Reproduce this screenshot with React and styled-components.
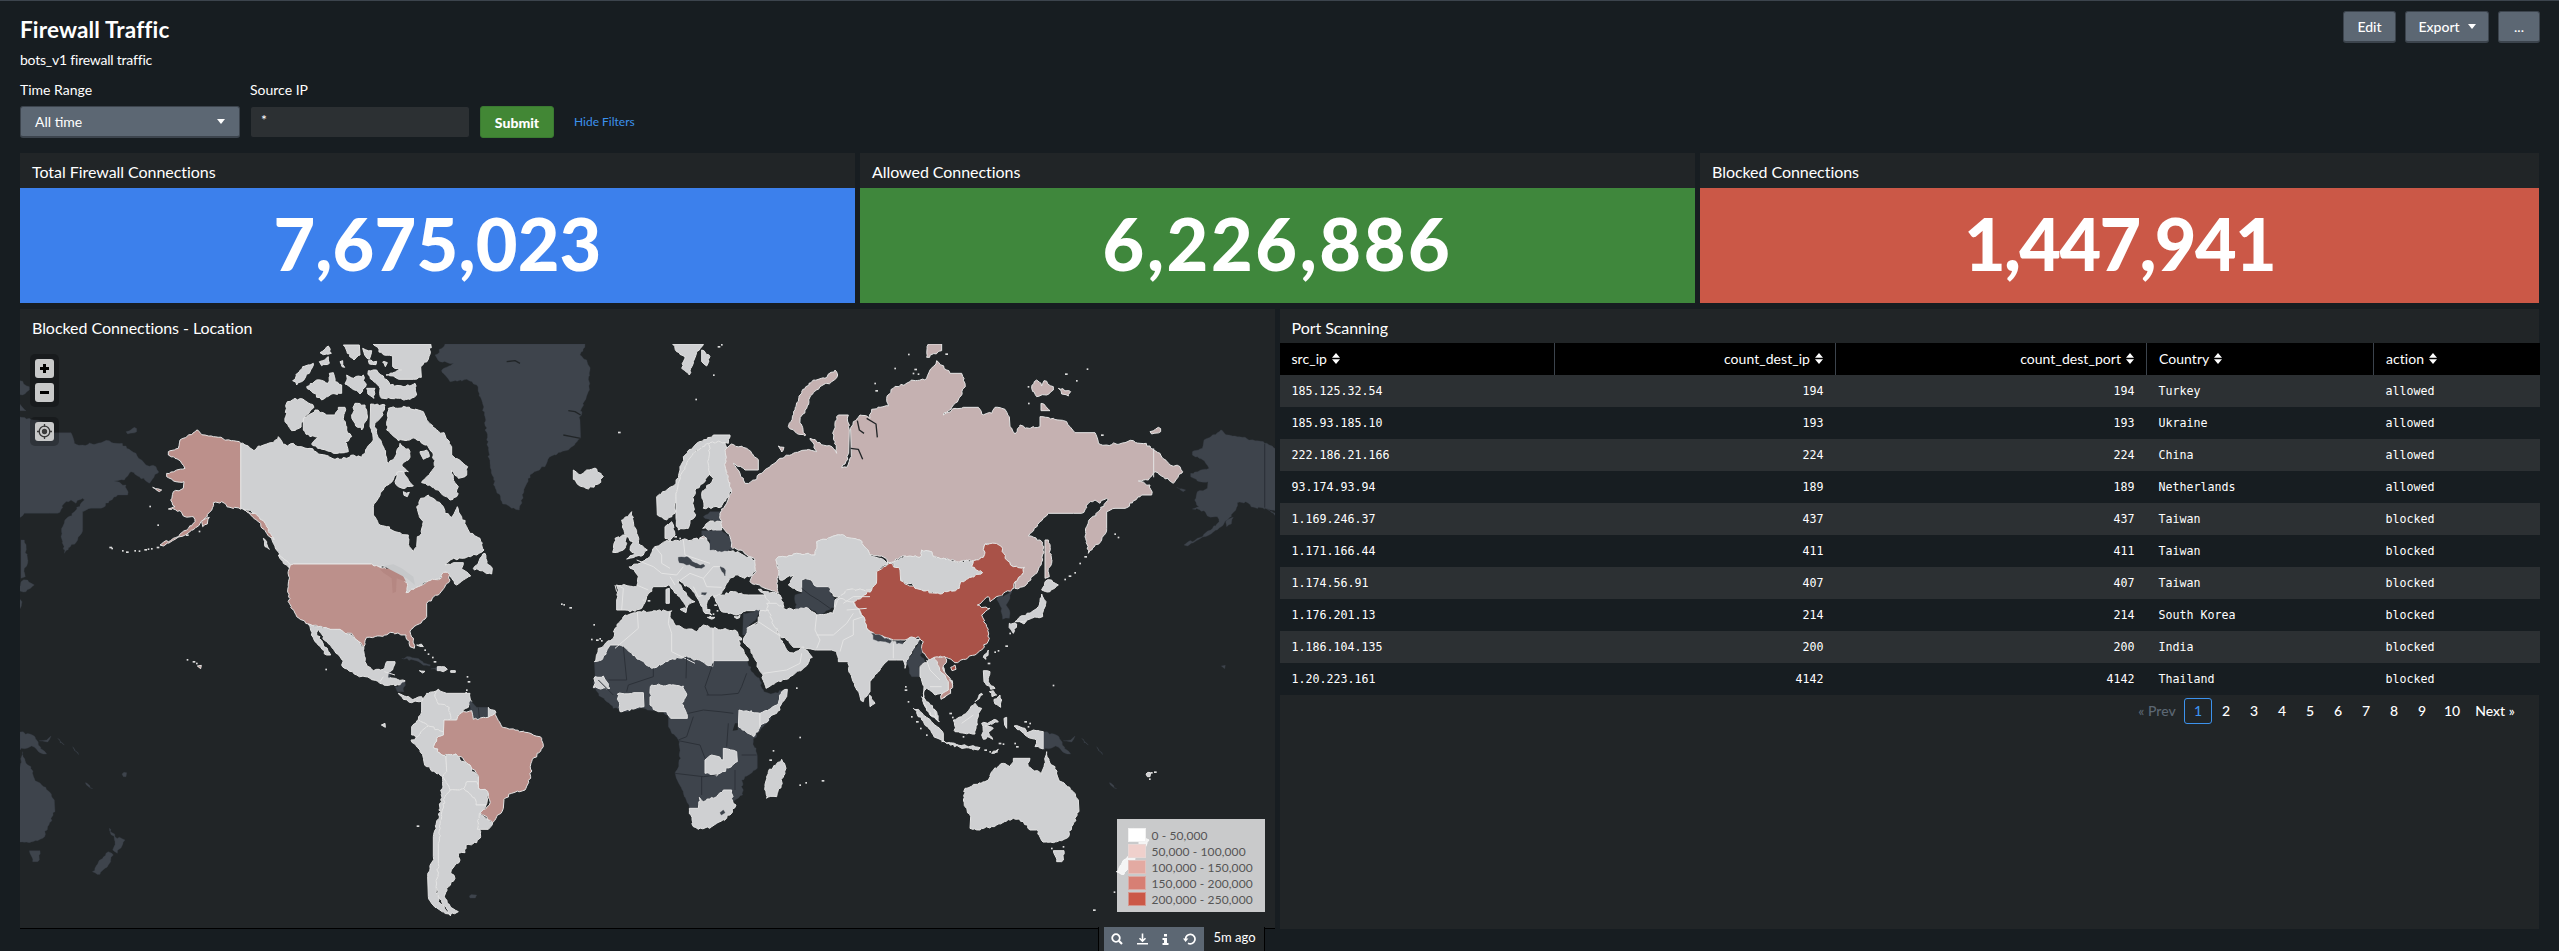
import React from "react";
import styled, { createGlobalStyle } from "styled-components";

const Global = createGlobalStyle`
  * { box-sizing: border-box; }
  html, body { margin: 0; background: #171d21; }
  body {
    color: #fff;
    font-family: Lato, "Liberation Sans", sans-serif;
    font-size: 14px;
    overflow: hidden;
  }
`;

const Page = styled.main`
  height: 951px;
  border-top: 1px solid #3c444d;
  padding: 0 20px;
  display: flex;
  flex-direction: column;
  overflow: hidden;
`;
const Header = styled.header`
  display: flex;
  justify-content: space-between;
  align-items: flex-start;
  height: 77px;
  padding-top: 10px;
  margin-right: -1px;
`;
const Title = styled.h1`
  margin: 6px 0 0;
  font-size: 22.5px;
  line-height: 26px;
  font-weight: 700;
  letter-spacing: 0.15px;
`;
const Description = styled.p`
  margin: 7px 0 0;
  line-height: 20px;
  letter-spacing: -0.22px;
`;
const Actions = styled.div`
  display: flex;
  gap: 9px;
`;
const Button = styled.button`
  height: 32px;
  width: ${(p) => p.$w}px;
  padding: 0;
  display: flex;
  align-items: center;
  justify-content: center;
  gap: 8px;
  border: 1px solid #3c444d;
  border-bottom-width: 2px;
  border-radius: 3px;
  background: #5c6773;
  color: #fff;
  font: 500 14px Lato, sans-serif;
`;
const Caret = styled.i`
  border: 4px solid transparent;
  border-top: 5px solid #fff;
  border-bottom: 0;
`;
const Filters = styled.form`
  display: flex;
  align-items: flex-end;
  height: 60px;
`;
const Field = styled.label`
  width: ${(p) => p.$w}px;
  margin-right: ${(p) => p.$gap}px;
  display: flex;
  flex-direction: column;
  gap: 6px;
  line-height: 20px;
`;
const Select = styled.span`
  height: 32px;
  display: flex;
  justify-content: space-between;
  align-items: center;
  padding: 0 14px;
  border: 1px solid #3c444d;
  border-bottom-width: 2px;
  border-radius: 3px;
  background: #5c6773;
`;
const Input = styled.span`
  height: 32px;
  padding: 3px 10px;
  border: 1px solid #171d21;
  border-radius: 3px;
  background: #2c3033;
`;
const Submit = styled.button`
  width: 74px;
  height: 32px;
  padding: 0;
  border: 1px solid #3a7a31;
  border-radius: 3px;
  background: #428735;
  color: #fff;
  font: 900 14px Lato, sans-serif;
`;
const HideLink = styled.a`
  margin-left: 20px;
  line-height: 33px;
  font-size: 12px;
  color: #3c92ed;
`;

const StatRow = styled.section`
  display: grid;
  grid-template-columns: 1fr 1fr calc((100% - 2px) / 3);
  gap: 5px;
  margin-top: 15px;
`;
const Panel = styled.article`
  background: #212527;
  min-width: 0;
  position: relative;
`;
const PanelTitle = styled.h2`
  margin: 0;
  height: ${(p) => p.$h}px;
  padding: 9px 12px 0;
  font-size: 16px;
  line-height: 20px;
  font-weight: 400;
  letter-spacing: -0.05px;
`;
const StatValue = styled.div`
  height: 115px;
  display: flex;
  align-items: center;
  justify-content: center;
  padding-bottom: 4px;
  background: ${(p) => p.$bg};
  font-size: 72px;
  font-weight: 900;
  line-height: 111px;
  letter-spacing: ${(p) => p.$track};
`;

const MainRow = styled.section`
  display: grid;
  grid-template-columns: calc(50% - 5px) 50%;
  gap: 5px;
  height: 620px;
  margin-top: 6px;
`;
const LargePanel = styled(Panel)`
  border-bottom: ${(p) => (p.$ruled ? "1px solid #000" : "0")};
`;
const MapFrame = styled.div`
  position: relative;
  height: 584px;
  svg.world { display: block; width: 1255px; height: 584px; }
`;
const MapControls = styled.div`
  position: absolute;
  left: 10px;
  top: 10px;
  display: flex;
  flex-direction: column;
  gap: 10px;
`;
const ControlGroup = styled.div`
  padding: 5px;
  display: flex;
  flex-direction: column;
  gap: 5px;
  border-radius: 5px;
  background: rgba(0, 0, 0, 0.25);
`;
const ControlButton = styled.button`
  width: 19px;
  height: 19px;
  padding: 0;
  border: 0;
  border-radius: 3px;
  background: #c8c9c9;
  display: flex;
  align-items: center;
  justify-content: center;
`;
const Legend = styled.ul`
  position: absolute;
  right: 10px;
  bottom: 16px;
  width: 148px;
  height: 93px;
  margin: 0;
  padding: 8px 0 0 11px;
  list-style: none;
  background: rgba(255, 255, 255, 0.76);
`;
const LegendItem = styled.li`
  display: flex;
  align-items: center;
  height: 16px;
  gap: 6px;
  font-size: 12px;
  color: #555;
  letter-spacing: 0.1px;
  white-space: nowrap;
`;
const Swatch = styled.span`
  width: 18px;
  height: 14px;
  border: 1px solid rgba(225, 225, 225, 0.45);
  background: ${(p) => p.$c};
`;
const PanelTools = styled.div`
  position: absolute;
  right: 10px;
  top: 618px;
  height: 26px;
  width: 167px;
  display: flex;
  padding-left: 5px;
  border-left: 1px solid #000;
  border-right: 1px solid #000;
  background: #212527;
`;
const ToolBar = styled.div`
  width: 100px;
  height: 26px;
  padding-bottom: 2px;
  display: flex;
  align-items: center;
  justify-content: space-around;
  background: #5c6773;
`;
const Age = styled.span`
  margin-left: 10px;
  line-height: 21px;
  font-size: 13px;
`;

const Table = styled.table`
  width: 100%;
  border-collapse: collapse;
  table-layout: fixed;
`;
const HeadCell = styled.th`
  height: 32px;
  width: ${(p) => p.$w}px;
  padding: 0 12px 2px;
  background: #000;
  border-right: ${(p) => (p.$last ? "0" : "1px solid #3c444d")};
  text-align: ${(p) => (p.$right ? "right" : "left")};
  font-weight: 400;
  font-size: 14px;
  letter-spacing: 0.05px;
`;
const Row = styled.tr`
  background: ${(p) => (p.$odd ? "#2c3033" : "#171d21")};
`;
const Cell = styled.td`
  height: 32px;
  padding: 0 12px;
  text-align: ${(p) => (p.$right ? "right" : "left")};
  font: 11.63px/32px "DejaVu Sans Mono", monospace;
`;
const Pager = styled.nav`
  display: flex;
  justify-content: flex-end;
  align-items: center;
  height: 26px;
  margin: 3px 17px 0 0;
`;
const PageLink = styled.a`
  width: ${(p) => p.$w || 28}px;
  height: 26px;
  line-height: 24px;
  text-align: center;
  border: 1px solid ${(p) => (p.$active ? "#3c92ed" : "transparent")};
  border-radius: 3px;
  color: ${(p) => (p.$muted ? "#5c6773" : p.$active ? "#3c92ed" : "#fff")};
  font-weight: 500;
`;

/* ---- World map ------------------------------------------------------ */

const TONES = {
  n: "#3e444c",
  g: "#cfd0d2",
  a: "#c5b1b1",
  b: "#bc908b",
  c: "#a95248",
};

/* Each region holds its origin on the map canvas and [tone, outline] pairs. */
const REGIONS = [
  {
    o: [0, 960],
    s: [
      ["g", "722,370 745,378 762,392 775,378 800,372 820,368 835,350 848,372 862,378 880,370 905,380 930,385 955,402 985,408 1005,418 1040,415 1060,405 1085,412 1100,385 1120,360 1110,320 1112,252 1155,255 1145,290 1125,310 1130,340 1150,380 1165,430 1178,420 1190,400 1200,370 1230,395 1225,420 1205,435 1225,455 1195,460 1170,490 1150,510 1135,535 1120,560 1120,585 1135,612 1160,620 1185,635 1225,645 1228,680 1240,695 1250,680 1252,650 1265,640 1270,605 1258,590 1250,560 1262,535 1285,525 1310,545 1330,560 1335,580 1355,592 1365,575 1372,560 1385,590 1400,620 1410,640 1440,655 1452,690 1430,705 1385,715 1350,720 1335,735 1360,728 1390,728 1385,745 1405,760 1412,768 1390,780 1370,795 1355,775 1345,760 1335,755 1320,775 1300,780 1280,785 1255,800 1218,818 1210,790 1190,755 1165,742 1140,740 1115,732 880,732 870,738 840,710 820,670 810,640 785,600 765,580 740,570 722,565"],
      ["g", "862,245 885,235 915,242 942,262 915,290 897,325 875,332 855,305"],
      ["g", "910,295 945,270 980,285 1005,285 1015,262 1035,262 1030,300 1040,330 1055,350 1035,365 1045,395 1000,400 960,385 935,372 955,352 930,350 910,330"],
      ["g", "1165,265 1220,262 1270,275 1280,300 1305,325 1335,345 1355,380 1355,405 1390,430 1403,440 1395,470 1375,475 1355,450 1360,475 1375,500 1370,530 1350,540 1320,515 1290,495 1265,488 1280,470 1305,440 1300,405 1285,380 1245,355 1195,362 1160,330"],
      ["g", "1065,250 1095,255 1100,300 1085,330 1065,310 1055,285"],
      ["g", "1120,72 1292,72 1285,118 1262,140 1264,172 1240,178 1200,178 1158,165 1205,150 1178,140 1178,108 1150,104"],
      ["g", "1105,152 1130,150 1150,168 1170,195 1215,200 1245,190 1250,225 1230,238 1145,235 1138,200 1110,175"],
      ["g", "920,200 950,180 985,190 988,160 1000,158 1005,185 1025,195 1025,220 990,225 965,240 935,215"],
      ["g", "878,182 908,140 940,130 928,160 905,185 890,195"],
      ["g", "1040,165 1060,175 1090,165 1097,200 1080,222 1055,205 1035,192"],
      ["g", "960,98 985,78 994,100 970,104"],
      ["g", "958,125 985,110 988,130 965,137"],
      ["g", "1030,75 1078,75 1080,105 1062,120 1042,100"],
      ["g", "1088,85 1115,92 1108,118 1094,105"],
      ["g", "1020,125 1028,122 1034,142 1026,140"],
      ["g", "1105,122 1130,124 1128,134 1108,132"],
      ["g", "1148,126 1162,128 1156,140"],
      ["g", "1100,205 1125,205 1122,235 1108,225"],
      ["g", "1190,458 1210,455 1225,480 1240,498 1215,505 1195,500 1185,485"],
      ["g", "1210,515 1228,517 1222,530 1212,526"],
      ["g", "1260,395 1280,390 1288,410 1270,418"],
      ["g", "1440,715 1455,700 1460,730 1477,745 1475,762 1440,752 1420,745"],
      ["g", "790,655 800,665 808,688 795,680"],
      ["g", "835,705 850,715 880,740 878,752 850,730"],
      ["b", "722,370 700,362 640,350 615,345 590,330 560,350 540,360 535,385 505,395 505,405 525,415 545,430 555,445 530,450 500,460 500,470 520,483 552,485 550,505 520,515 512,540 525,560 505,567 540,572 550,588 580,590 585,605 560,630 520,655 480,675 490,678 540,650 585,625 610,600 630,575 640,548 665,545 690,562 722,568"],
      ["b", "730,568 765,580 790,602 812,640 822,660 800,640 775,605"],
      ["b", "605,605 628,592 622,612 608,620"],
      ["b", "458,502 485,510 478,515"],
      ["b", "880,732 1115,732 1140,742 1190,755 1222,790 1218,818 1255,800 1285,783 1320,777 1330,757 1343,757 1350,780 1315,825 1280,850 1280,890 1250,915 1230,935 1240,962 1243,985 1230,980 1218,945 1180,938 1140,948 1100,952 1092,980 1075,965 1055,940 1035,945 1020,930 990,928 955,920 925,912 890,890 868,850 865,800 868,745"],
    ],
  },
  {
    o: [480, 1890],
    s: [
      ["g", "445,-18 475,-10 510,-2 540,-2 555,10 575,15 600,40 612,52 615,95 640,122 670,118 680,95 705,95 700,112 690,125 688,142 735,152 730,165 705,167 660,160 630,145 590,135 545,105 550,92 525,65 500,35 475,-2 470,8 490,45 512,75 500,75 465,35"],
      ["n", "705,170 735,156 732,185 712,185"],
      ["n", "687,128 694,126 690,142 685,142"],
      ["g", "715,190 740,200 760,208 785,200 790,212 755,218 730,208"],
      ["n", "725,85 750,80 780,90 812,105 790,106 760,90"],
      ["n", "812,117 832,110 832,123"],
      ["g", "832,110 845,110 862,118 850,125 832,122"],
      ["g", "778,122 795,124 788,129"],
      ["g", "872,122 886,122 886,127 872,127"],
      ["g", "790,205 800,190 835,178 825,200 835,222 868,232 872,268 852,270 850,305 805,288 775,268 785,240 785,215"],
      ["g", "835,178 860,190 930,190 935,215 925,232 900,250 890,270 872,268 868,232 835,222 825,200"],
      ["n", "932,212 950,232 985,232 985,262 940,268 928,240"],
      ["g", "985,232 1008,248 998,262 985,262"],
      ["b", "852,270 890,270 905,248 935,242 940,268 985,262 1005,250 1018,275 1025,290 1065,300 1105,308 1145,325 1150,350 1115,395 1112,440 1095,480 1055,490 1032,508 1030,535 1010,560 998,578 960,548 988,525 985,490 955,475 955,440 930,405 888,372 845,375 820,350 830,325 850,315"],
      ["g", "775,268 805,288 768,322 755,315 755,290"],
      ["g", "768,322 805,288 850,305 850,315 830,325 820,350 845,375 858,378 860,425 848,440 800,410 780,360 753,330"],
      ["g", "858,378 888,372 900,390 930,405 935,425 955,440 955,475 950,455 920,455 912,475 870,480 848,440 860,425"],
      ["g", "920,455 950,455 955,475 975,478 985,495 978,525 948,525 945,505 912,475"],
      ["g", "870,480 912,475 945,505 948,525 978,525 960,548 955,590 962,620 950,638 918,645 915,668 895,670 900,690 885,705 872,730 885,745 860,775 855,805 862,820 895,845 870,855 835,800 828,770 835,700 835,640 845,560 855,500"],
      ["g", "848,440 870,480 855,500 845,560 835,640 835,700 828,770 840,820 872,858 825,832 805,800 803,740 820,680 820,620 838,560 845,490"],
      ["g", "958,550 998,578 985,598 952,598"],
      ["n", "928,798 950,795 946,804 930,804"],
      ["g", "770,45 784,42 790,50"],
      ["g", "664,285 675,280 676,292"],
      ["b", "112,108 124,106 122,116"],
    ],
  },
  {
    o: [1260, 960],
    s: [
      ["n", "75,72 495,72 480,105 500,120 510,150 505,215 485,265 480,300 482,355 445,390 395,408 375,440 330,465 310,520 298,570 270,560 248,552 225,500 210,430 200,360 195,290 185,240 170,195 140,178 90,185 65,150 100,130 60,125 45,105"],
      ["g", "460,450 480,465 500,450 530,447 550,470 535,492 505,507 475,495 460,478"],
      ["g", "605,600 625,590 635,575 640,605 650,640 660,675 682,690 670,705 620,717 645,700 630,690 640,665 620,650 612,630"],
      ["g", "585,655 615,645 620,670 610,690 578,697 582,670"],
      ["g", "758,72 850,72 830,95 820,130 808,165 785,145 795,110 770,95"],
      ["g", "845,90 870,110 860,138 845,125"],
      ["g", "710,530 740,510 768,490 780,450 790,410 830,370 880,345 930,345 925,370 900,365 870,368 820,400 795,440 775,490 768,530 765,580 740,600 712,585"],
      ["g", "865,370 870,400 868,465 850,490 825,510 818,550 825,590 810,600 805,625 775,630 768,595 768,530 775,490 795,440 820,400"],
      ["g", "870,368 900,365 915,368 920,400 918,450 935,510 905,560 850,565 845,520 880,475 868,462 865,420"],
      ["g", "735,620 755,605 765,645 750,665 735,655"],
      ["n", "850,590 870,575 905,575 900,603 870,600"],
      ["g", "848,625 870,603 905,605 905,630 880,632"],
      ["g", "705,680 735,665 785,660 860,655 872,690 940,692 1008,722 1005,755 975,775 945,765 920,790 905,820 870,830 860,860 875,885 855,880 840,850 825,820 790,790 775,778 775,790 800,825 825,845 810,850 800,865 785,840 760,810 745,795 730,800 700,800 680,830 665,865 630,875 615,870 590,870 590,840 595,810 590,795 650,800 655,770 628,740 660,730 690,710"],
      ["n", "845,632 905,632 930,650 938,690 905,695 870,690 870,660 845,645"],
      ["a", "838,655 850,648 860,655"],
      ["n", "775,712 800,710 830,730 855,738 845,745 800,735 778,728"],
      ["n", "900,740 912,745 915,768"],
      ["n", "845,818 860,818 856,825 845,824"],
      ["g", "738,808 748,805 748,850 738,850"],
      ["g", "780,868 800,866 798,878"],
      ["g", "862,892 885,892 880,896"],
      ["g", "942,890 960,886 950,896"],
      ["g", "880,830 905,825 940,815 985,825 1035,825 1050,850 1040,872 980,872 950,885 905,875"],
      ["g", "1015,808 1080,825 1092,862 1060,855 1040,872 1048,845 1035,825"],
      ["n", "970,880 1020,870 1010,895 985,920 985,945 968,945"],
      ["a", "1245,150 1253,165 1235,185 1200,200 1175,225 1155,270 1140,300 1155,348 1130,340 1105,320 1125,270 1145,215 1180,180 1215,175"],
      ["a", "1075,378 1092,382 1085,396"],
      ["n", "1145,780 1165,778 1190,800 1225,800 1245,840 1243,862 1200,885 1170,865 1130,870 1125,825 1145,820"],
    ],
  },
  {
    o: [2520, 960],
    s: [
      ["a", "-345,390 -325,372 -280,385 -245,420 -245,450 -285,450 -320,430 -300,460 -285,490 -255,480 -230,455 -200,432 -180,415 -140,400 -100,390 -70,395 -90,355 -60,368 -20,385 -10,400 -22,340 -5,285 25,285 28,330 26,400 15,432 5,443 20,442 34,410 32,330 40,305 60,285 90,295 95,268 145,258 140,235 160,205 210,185 260,175 270,150 290,122 320,150 330,160 365,160 375,190 365,225 340,255 310,285 345,265 370,262 415,262 425,282 455,280 465,262 495,268 508,290 510,320 525,342 540,315 555,325 600,320 600,290 640,295 680,305 690,320 705,338 765,338 775,370 800,375 855,368 880,362 930,378 960,400 990,435 1020,440 1028,455 1000,490 970,470 945,455 925,480 895,483 930,495 935,525 905,525 855,565 825,565 800,575 800,625 785,660 745,700 735,650 745,605 775,575 805,540 800,535 780,550 765,540 745,550 725,580 700,580 625,580 600,605 565,648 600,660 612,680 608,720 590,760 550,800 525,805 525,785 545,765 553,742 520,740 495,715 475,675 435,672 430,712 400,722 350,725 320,715 280,710 275,695 245,690 240,712 195,708 150,728 125,708 90,705 60,660 30,665 0,645 -70,665 -75,705 -130,700 -190,715 -185,750 -190,790 -185,820 -225,805 -270,785 -252,755 -255,720 -300,690 -322,685 -330,650 -355,620 -360,580 -340,550 -325,512 -342,450"],
      ["a", "265,72 305,72 305,92 260,112"],
      ["a", "575,205 590,180 605,198 612,182 640,200 640,210 620,225 590,230"],
      ["a", "655,205 692,215 685,228 665,222"],
      ["a", "603,250 630,272 603,272"],
      ["a", "930,335 955,322 962,335 935,342"],
      ["a", "615,660 625,660 635,730 625,745 628,770 615,775"],
      ["g", "0,645 60,660 90,705 145,728 110,755 110,780 95,810 30,808 0,830 -20,828 -35,800 -70,800 -95,778 -115,780 -115,815 -155,795 -140,765 -180,780 -190,715 -130,700 -75,705 -70,665"],
      ["g", "-15,840 0,830 30,808 95,810 40,845 75,900 80,925 20,910 -20,905 -17,862"],
      ["g", "155,728 195,708 240,712 245,690 275,695 280,710 345,725 400,722 395,740 428,758 362,785 358,805 300,822 230,808 215,790 182,782 178,750"],
      ["c", "150,730 180,750 182,782 225,805 300,822 358,805 362,785 428,758 395,740 400,722 430,712 435,672 465,670 485,680 495,715 520,740 553,742 545,765 525,785 522,805 490,820 450,845 445,830 412,855 450,865 425,885 440,920 448,955 425,990 405,1005 370,1018 345,1028 325,1015 300,1008 270,1022 245,990 250,965 235,950 195,960 160,960 110,945 80,925 75,900 40,845 95,810 110,780 110,755"],
      ["n", "470,838 515,812 510,835 498,855 510,880 508,895 488,898 485,865"],
      ["g", "615,785 635,780 655,795 630,815 605,810"],
      ["g", "605,822 618,845 608,890 575,895 550,905 525,905 540,890 575,875 595,860"],
      ["g", "508,910 530,912 520,940 512,928"],
      ["g", "540,905 560,902 552,912"],
    ],
  },
  {
    o: [1680, 1680],
    s: [
      ["g", "620,130 650,130 670,145 700,150 745,145 770,165 820,160 830,130 840,115 880,125 915,180 920,205 950,225 1000,245 1030,250 1050,232 1080,238 1060,270 1040,300 1035,325 1030,300 1010,300 985,300 960,330 930,365 930,395 910,425 890,390 870,340 865,305 835,305 830,275 815,270 770,270 730,262 700,262 680,240 660,225 640,195 625,155"],
      ["g", "600,152 625,150 640,195 657,222 668,248 690,278 715,272 730,260 757,292 730,325 690,350 618,385 605,340 580,290 550,240 562,208 595,190"],
      ["n", "935,220 995,242 990,250 940,238"],
      ["n", "1008,243 1030,245 1028,252 1010,251"],
      ["n", "1080,240 1085,270 1080,285 1095,305 1075,320 1085,350 1055,350 1040,310 1060,270"],
      ["g", "928,405 945,430 930,440"],
      ["g", "1080,320 1105,300 1130,295 1160,345 1178,370 1172,395 1145,415 1145,400 1125,405 1115,395 1100,385 1090,400 1100,430 1130,455 1138,485 1110,465 1090,420 1092,380 1080,350"],
      ["b", "1122,292 1155,290 1160,300 1148,325 1165,350 1178,375 1172,400 1143,418 1146,402 1165,390 1165,365 1138,322"],
      ["c", "1172,322 1185,315 1188,328 1176,332"],
      ["n", "103,305 150,255 180,255 275,325 350,292 380,290 458,320 460,302 562,302 575,335 600,362 612,395 640,400 682,388 680,410 640,465 590,520 580,545 592,590 592,625 545,660 548,705 525,720 500,770 455,800 415,808 400,800 388,745 370,700 345,640 362,595 355,540 325,500 325,470 300,452 250,445 180,455 140,425 100,385 105,345"],
      ["g", "195,165 235,155 290,153 335,152 330,170 345,195 410,215 430,195 460,205 525,210 545,240 535,240 552,275 565,302 460,302 458,320 380,290 350,292 275,325 180,255 150,255 125,300 103,305 115,265 160,235 165,205"],
      ["g", "105,350 130,348 150,385 100,383"],
      ["g", "172,402 220,398 250,398 252,440 180,455"],
      ["g", "270,410 275,375 370,378 380,405 365,430 382,475 332,475 320,455 295,455 270,435"],
      ["g", "537,450 600,460 600,500 580,530 535,500"],
      ["g", "600,460 650,435 665,395 682,388 680,410 650,460 600,500"],
      ["g", "435,600 455,585 490,600 490,565 530,575 532,605 470,648 435,640"],
      ["g", "388,745 415,745 418,712 430,725 470,710 490,690 515,690 520,730 528,735 500,775 455,800 415,808 400,800"],
      ["n", "480,758 490,750 495,758 484,765"],
      ["g", "665,598 678,625 650,710 620,715 615,680 625,635"],
    ],
  },
  {
    o: [2700, 1800],
    s: [
      ["g", "40,325 60,335 100,370 130,400 130,425 100,405 65,360"],
      ["g", "65,290 80,305 105,330 110,360 85,335"],
      ["g", "125,425 200,438 240,443 235,450 180,442"],
      ["g", "160,360 185,350 225,310 245,325 235,350 225,402 195,400 165,395"],
      ["g", "245,370 290,360 295,366 255,378 280,385 265,395 278,418 262,410 250,418"],
      ["g", "250,212 270,215 265,245 285,265 272,268 252,245"],
      ["g", "282,298 300,285 305,300 302,322 285,312"],
      ["g", "268,275 280,272 290,285 276,290"],
      ["g", "225,305 245,280 248,284"],
      ["g", "250,172 265,150 258,178"],
      ["g", "312,355 320,352 320,385 314,375"],
      ["g", "342,378 375,385 378,400 400,390 430,395 430,447 405,440 410,420 375,405"],
      ["g", "275,460 295,448 290,455"],
      ["n", "432,396 477,410 487,435 512,462 492,458 467,438 432,450"],
      ["n", "490,422 512,420 525,408 515,426"],
      ["n", "545,415 565,435 560,432"],
      ["n", "590,440 604,458 608,464 596,452"],
      ["n", "628,548 650,566 640,562"],
      ["g", "190,600 195,565 265,540 275,515 310,490 330,500 340,475 390,475 385,500 425,522 432,500 440,455 450,490 465,500 475,535 520,575 535,600 537,635 515,680 500,715 460,728 425,722 410,690 390,690 370,665 340,655 290,675 240,690 210,685 212,650"],
      ["g", "460,752 492,752 485,785 470,785"],
      ["g", "700,685 717,710 747,720 737,740 724,760 710,750 717,725"],
      ["g", "697,755 712,765 697,795 672,823 649,815 662,795"],
      ["g", "738,522 752,518 750,530 742,530"],
    ],
  },
];

/* Small islands: x, y on the map canvas */
const ISLANDS = [
  [330, 1642], [336, 1645], [368, 1652], [380, 1656], [405, 1652], [418, 1653], [435, 1649], [445, 1647],
  [455, 1646], [472, 1642], [450, 1519], [474, 1575], [560, 1605], [598, 1594],
  [562, 1979], [580, 1985], [590, 1990], [978, 2008], [1262, 1938], [1275, 1950], [1285, 1962],
  [1303, 1985], [1298, 1972], [1402, 2030], [1405, 2045], [1400, 2070], [1398, 2078], [1252, 2478],
  [1685, 1812], [1692, 1814], [1710, 1823], [1782, 1874], [1775, 1918], [1790, 1920], [1805, 1922], [1800, 1916],
  [1856, 1297], [2088, 1198], [2141, 1125], [2155, 1040], [2165, 1034],
  [1930, 1800], [1945, 1802], [2120, 1830], [2130, 1850], [2145, 1815], [2140, 1842], [2152, 1832], [2025, 1610], [2040, 1615],
  [2625, 1150], [2628, 1172], [2685, 1105], [2726, 1063], [2745, 1108], [2740, 1120], [2755, 1122], [2838, 1062],
  [3085, 1160], [3086, 1210], [3197, 1122], [3262, 1107], [3230, 1142], [3305, 1305], [3345, 1602], [3355, 1612],
  [3255, 1670], [3240, 1690], [3225, 1718], [3208, 1728], [3195, 1738],
  [3030, 1900], [3018, 1938], [2985, 1956], [2995, 1952], [2965, 1990], [3160, 2056],
  [2717, 2060], [2716, 2070], [2725, 2105], [2735, 2150], [2750, 2165], [2762, 2185], [2780, 2205],
  [2850, 2140], [2858, 2152], [2890, 2210], [2955, 2250], [2970, 2255], [2990, 2255], [2998, 2230], [3010, 2232],
  [3045, 2230], [3050, 2240], [3085, 2180], [3090, 2170], [3075, 2165],
  [2400, 2212], [2320, 2252], [2310, 2280], [2400, 2355], [2418, 2348], [2467, 2342], [2390, 2064],
  [3343, 2676], [3281, 2730], [3155, 2545], [3190, 2540], [3464, 2316], [3449, 2337], [3455, 2318],
];

/* Country borders drawn over the light areas */
const BORDERS = [
  "M1965 1640 1985 1665 1985 1690 2010 1705 M1910 1680 1960 1700 1985 1720 M1985 1720 2030 1725 2050 1700 M2050 1620 2055 1665 2130 1690 M2035 1745 2070 1720 2110 1735 2120 1760 M2110 1735 2140 1700 2160 1700 M1850 1755 1870 1765 1865 1830 M1910 1755 1945 1770 M2080 1760 2095 1790 2110 1785 M2120 1760 2165 1762 M2010 1730 2025 1755",
  "M1912 1835 1915 1885 1845 1945 M2010 1832 2005 1870 2015 1900 2015 1955 2085 1990 M2139 1885V1985 M2240 1885 2275 1865 2340 1908 M2290 2020 2360 2010 2400 1990 2405 1960 M2450 1845 2445 1890 2460 1920 2450 1945 M2450 1905 2500 1905 2540 1870 2560 1840 M2520 1955 2530 1920 2560 1905 2560 1860 2590 1850 M2680 1930V1975 M2780 1980 2790 2010 2820 2040 M2790 2060 2825 2060 M1845 1755 1850 1775",
  "M2530 1810 2560 1790 2610 1790 M2540 1830 2600 1825 M1153 2015 1185 2025 M1140 2045 1150 2030 M2885 2170 2920 2145",
];
const DARK_BORDERS = [
  "M1870 1940 1880 2040 1825 2040 M1960 2005 1960 2030 1885 2055 1880 2075 M2060 1970 2058 2035 M2139 1990 2115 2060 2125 2085 M2120 2085 2165 2085 2215 2080 2225 2060 2240 2020 M2065 2140 2110 2130 2160 2135 2200 2140 M2080 2150 2060 2210 2035 2220 M2035 2222 2100 2235 2115 2275 M2025 2320 2110 2330 2150 2325 M2105 2330V2385 M2205 2310V2370 M2185 2170 2180 2240 M2225 2265 2270 2265 M2405 1765 2430 1785 2455 1800 2490 1825 M1795 2040 1840 2085 M1435 2122 1438 2155",
];
const WATER = [
  "M2552 1345 2575 1348 2588 1378",
  "M2572 1262 2578 1290 2592 1300",
  "M2600 1255 2628 1272 2632 1312",
  "M1560 1090 1545 1082 1520 1085",
  "M1742 1245 1725 1235 1705 1232 M1742 1315 1715 1310 1690 1305",
];

function random(seed) {
  const v = Math.sin(seed) * 43758.5453;
  return v - Math.floor(v) - 0.5;
}

/* Turns a coarse outline into a ragged coast; straight parallels stay straight. */
function coast(outline) {
  const pts = outline.split(" ").map((p) => p.split(",").map(Number));
  const out = [];
  pts.forEach(([x1, y1], i) => {
    const [x2, y2] = pts[(i + 1) % pts.length];
    out.push(`${x1},${y1}`);
    const len = Math.hypot(x2 - x1, y2 - y1);
    if (Math.abs(x1 - x2) < 3 || Math.abs(y1 - y2) < 1) return;
    const n = Math.floor(len / 7);
    for (let k = 1; k < n; k += 1) {
      const x = x1 + ((x2 - x1) * k) / n;
      const y = y1 + ((y2 - y1) * k) / n;
      const seed = Math.round(x) * 12.9898 + Math.round(y) * 78.233;
      out.push(`${(x + random(seed) * 7).toFixed(1)},${(y + random(seed + 5) * 7).toFixed(1)}`);
    }
  });
  return `M${out.join("L")}Z`;
}

const SHAPES = REGIONS.map((r) => ({ o: r.o, s: r.s.map(([t, d]) => [t, coast(d)]) }));

function Land({ shift = 0, muted = false }) {
  return (
    <g transform={`translate(${shift} 0)`}>
      {SHAPES.map(({ o, s }) => (
        <g key={o.join()} transform={`translate(${o[0]} ${o[1]})`}>
          {s.map(([tone, d], i) => (
            <path
              key={i}
              d={d}
              fill={muted ? TONES.n : TONES[tone]}
              stroke={muted || tone === "n" ? "#3b4149" : "#e4e4e4"}
              strokeWidth={muted || tone === "n" ? 1 : 3}
            />
          ))}
        </g>
      ))}
    </g>
  );
}

function WorldMap() {
  return (
    <svg className="world" viewBox="60 1032 3765 1752" preserveAspectRatio="none" strokeLinejoin="round">
      <Land shift={-3072} muted />
      <Land shift={3072} muted />
      <Land />
      {ISLANDS.map(([x, y], i) => (
        <rect key={i} x={x - 2} y={y - 2} width={i % 3 ? 5 : 8} height="5" fill="#dcdcdc" />
      ))}
      <g fill="none" stroke="#e4e4e4" strokeWidth="3">
        {BORDERS.map((d) => <path key={d} d={d} />)}
        <path d="M3461 1345V1432" />
      </g>
      <g fill="none" stroke="#2c3138" strokeWidth="3">
        {DARK_BORDERS.map((d) => <path key={d} d={d} />)}
        <path d="M3794 1332V1522" />
      </g>
      <g fill="none" stroke="#212527" strokeWidth="4">
        {WATER.map((d) => <path key={d} d={d} />)}
      </g>
      <path fill="#b58782" d="M1140 1708 1170 1705 1205 1720 1218 1745 1190 1735 1188 1775 1178 1780 1175 1735 1150 1718Z" />
      <path fill="#c6c8ca" d="M1150 1698 1180 1693 1205 1705 1240 1730 1245 1755 1220 1735Z" />
      <path fill="#212527" d="M2205 2170 2213 2170 2213 2190 2198 2192Z" />
    </svg>
  );
}

/* ---- Small icons ---------------------------------------------------- */

const SortGlyph = styled.svg`
  margin-left: 5px;
  fill: #fff;
`;
const SortIcon = () => (
  <SortGlyph width="8" height="11" viewBox="0 0 8 11">
    <path d="M4 0 8 4.7H0ZM4 11 0 6.3H8Z" />
  </SortGlyph>
);
const PlusIcon = () => (
  <svg width="9" height="9"><path d="M3 0h3v3h3v3H6v3H3V6H0V3h3z" /></svg>
);
const MinusIcon = () => (
  <svg width="9" height="9"><path d="M0 3h9v3H0z" /></svg>
);
const LocateIcon = () => (
  <svg width="15" height="15" fill="none" stroke="#3a3a3a" strokeWidth="1.3">
    <circle cx="7.5" cy="7.5" r="5.3" />
    <circle cx="7.5" cy="7.5" r="2" fill="#3a3a3a" />
    <path d="M7.5 0v3M7.5 12v3M0 7.5h3M12 7.5h3" />
  </svg>
);
const SearchIcon = () => (
  <svg width="12" height="12" fill="none" stroke="#fff" strokeWidth="1.8">
    <circle cx="5" cy="5" r="3.8" /><path d="M7.8 7.8 11 11" strokeWidth="2.2" />
  </svg>
);
const DownloadIcon = () => (
  <svg width="11" height="12" fill="none" stroke="#fff" strokeWidth="1.6">
    <path d="M5.5 0.5v7.5M2.5 5.2 5.5 8.2 8.5 5.2M0 10.7h11" />
  </svg>
);
const InfoIcon = () => (
  <svg width="7" height="11" fill="#fff">
    <path d="M2 0h3v2.6H2zM0.5 4H5v5h1.5v2H0.5V9H2V6H0.5z" />
  </svg>
);
const RefreshIcon = () => (
  <svg width="13" height="12" fill="none" stroke="#fff" strokeWidth="1.7">
    <path d="M2.6 6.5A4.7 4.7 0 1 1 5 10.2" /><path d="M0 5.5h5.4L2.6 9z" fill="#fff" stroke="none" />
  </svg>
);

/* ---- Data ----------------------------------------------------------- */

const STATS = [
  { title: "Total Firewall Connections", value: "7,675,023", bg: "#3c80ec", track: "0.2px" },
  { title: "Allowed Connections", value: "6,226,886", bg: "#3f873c", track: "2.6px" },
  { title: "Blocked Connections", value: "1,447,941", bg: "#cb5847", track: "-1.7px" },
];
const LEGEND = [
  ["#fff", "0 - 50,000"],
  ["#efd0cc", "50,000 - 100,000"],
  ["#e3aaa2", "100,000 - 150,000"],
  ["#d77f74", "150,000 - 200,000"],
  ["#cb5847", "200,000 - 250,000"],
];
const COLUMNS = [
  { name: "src_ip", w: 275 },
  { name: "count_dest_ip", w: 281, right: true },
  { name: "count_dest_port", w: 311, right: true },
  { name: "Country", w: 227 },
  { name: "action", w: 166 },
];
const ROWS = [
  ["185.125.32.54", "194", "194", "Turkey", "allowed"],
  ["185.93.185.10", "193", "193", "Ukraine", "allowed"],
  ["222.186.21.166", "224", "224", "China", "allowed"],
  ["93.174.93.94", "189", "189", "Netherlands", "allowed"],
  ["1.169.246.37", "437", "437", "Taiwan", "blocked"],
  ["1.171.166.44", "411", "411", "Taiwan", "blocked"],
  ["1.174.56.91", "407", "407", "Taiwan", "blocked"],
  ["1.176.201.13", "214", "214", "South Korea", "blocked"],
  ["1.186.104.135", "200", "200", "India", "blocked"],
  ["1.20.223.161", "4142", "4142", "Thailand", "blocked"],
];

export default function App() {
  return (
    <Page>
      <Global />
      <Header>
        <div>
          <Title>Firewall Traffic</Title>
          <Description>bots_v1 firewall traffic</Description>
        </div>
        <Actions>
          <Button $w={53}>Edit</Button>
          <Button $w={84}>Export <Caret /></Button>
          <Button $w={42}>...</Button>
        </Actions>
      </Header>
      <Filters>
        <Field $w={220} $gap={10}>Time Range<Select>All time<Caret /></Select></Field>
        <Field $w={220} $gap={10}>Source IP<Input>*</Input></Field>
        <Submit type="button">Submit</Submit>
        <HideLink>Hide Filters</HideLink>
      </Filters>
      <StatRow>
        {STATS.map((s) => (
          <Panel key={s.title}>
            <PanelTitle $h={35}>{s.title}</PanelTitle>
            <StatValue $bg={s.bg} $track={s.track}>{s.value}</StatValue>
          </Panel>
        ))}
      </StatRow>
      <MainRow>
        <LargePanel $ruled>
          <PanelTitle $h={35}>Blocked Connections - Location</PanelTitle>
          <MapFrame>
            <WorldMap />
            <MapControls>
              <ControlGroup>
                <ControlButton><PlusIcon /></ControlButton>
                <ControlButton><MinusIcon /></ControlButton>
              </ControlGroup>
              <ControlGroup><ControlButton><LocateIcon /></ControlButton></ControlGroup>
            </MapControls>
            <Legend>
              {LEGEND.map(([c, label]) => (
                <LegendItem key={label}><Swatch $c={c} />{label}</LegendItem>
              ))}
            </Legend>
          </MapFrame>
          <PanelTools>
            <ToolBar><SearchIcon /><DownloadIcon /><InfoIcon /><RefreshIcon /></ToolBar>
            <Age>5m ago</Age>
          </PanelTools>
        </LargePanel>
        <LargePanel>
          <PanelTitle $h={34}>Port Scanning</PanelTitle>
          <Table>
            <thead>
              <tr>
                {COLUMNS.map((c, i) => (
                  <HeadCell key={c.name} $w={c.w} $right={c.right} $last={i === 4}>{c.name}<SortIcon /></HeadCell>
                ))}
              </tr>
            </thead>
            <tbody>
              {ROWS.map((r, i) => (
                <Row key={r[0]} $odd={i % 2 === 0}>
                  {r.map((v, j) => <Cell key={j} $right={COLUMNS[j].right}>{v}</Cell>)}
                </Row>
              ))}
            </tbody>
          </Table>
          <Pager>
            <PageLink $w={54} $muted>« Prev</PageLink>
            {[1, 2, 3, 4, 5, 6, 7, 8, 9].map((n) => <PageLink key={n} $active={n === 1}>{n}</PageLink>)}
            <PageLink $w={32}>10</PageLink>
            <PageLink $w={54}>Next »</PageLink>
          </Pager>
        </LargePanel>
      </MainRow>
    </Page>
  );
}
